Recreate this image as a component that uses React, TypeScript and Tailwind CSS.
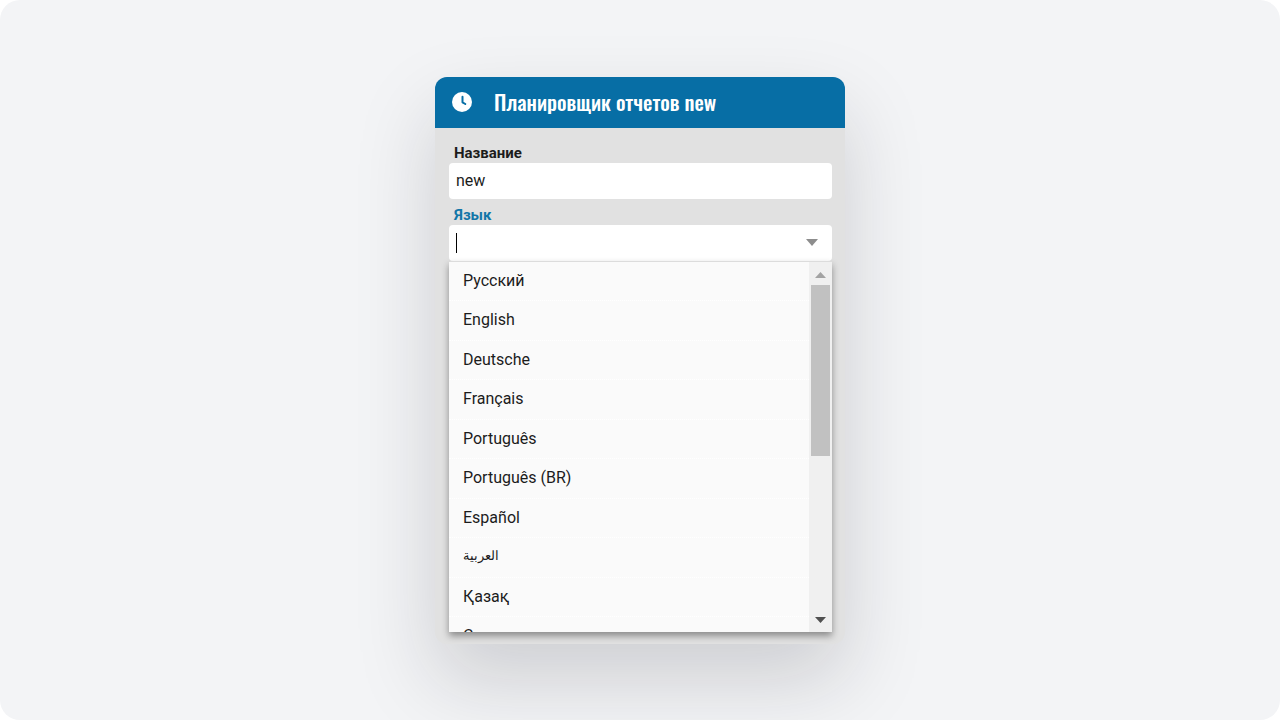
import { useState } from 'react';

const LANGUAGES = [
  { label: 'Русский' },
  { label: 'English' },
  { label: 'Deutsche' },
  { label: 'Français' },
  { label: 'Português' },
  { label: 'Português (BR)' },
  { label: 'Español' },
  { label: 'العربية', small: true },
  { label: 'Қазақ' },
  { label: 'Српски' },
];

function ClockIcon() {
  return (
    <svg width="20" height="20" viewBox="0 0 20 20" aria-hidden="true">
      <circle cx="10" cy="10" r="10" fill="#fff" />
      <path d="M10.5 4.8V10.3L13.3 12" fill="none" stroke="#076ea5" strokeWidth="2" strokeLinecap="round" strokeLinejoin="round" />
    </svg>
  );
}

function Triangle({ up, className }: { up?: boolean; className: string }) {
  return (
    <svg viewBox="0 0 12 6" preserveAspectRatio="none" aria-hidden="true" className={className}>
      <path d={up ? 'M0 6L6 0L12 6Z' : 'M0 0H12L6 6Z'} fill="currentColor" />
    </svg>
  );
}

export default function App() {
  const [name, setName] = useState('new');
  const [language, setLanguage] = useState('');
  const [open, setOpen] = useState(true);

  return (
    <div className="min-h-screen bg-white font-[Roboto,'Liberation_Sans',sans-serif] text-base text-[#1c1c1c]">
      <main className="flex min-h-screen items-center justify-center overflow-hidden rounded-[20px] bg-[#f3f4f6]">
        <form className="w-[410px] max-w-full rounded-xl bg-[#e1e1e1] shadow-[0_36px_80px_0_rgba(24,26,36,0.17)]">
          <header className="flex h-[51px] items-center gap-[22px] rounded-t-xl bg-[#076ea5] px-[17px]">
            <ClockIcon />
            <h1 className="font-['Oswald','Liberation_Sans_Narrow',sans-serif] text-[21px] leading-8 font-medium whitespace-nowrap text-white">
              Планировщик отчетов new
            </h1>
          </header>

          <div className="pt-[15px] pr-[13px] pb-3 pl-[14px]">
            <label htmlFor="name" className="block px-[5px] text-[15px] leading-5 font-bold">Название</label>
            <input
              id="name"
              value={name}
              onChange={(e) => setName(e.target.value)}
              className="block h-9 w-full rounded-sm bg-white px-[7px] outline-none"
            />

            <label htmlFor="language" className="mt-[6px] block px-[5px] text-[15px] leading-5 font-bold text-[#1376a8]">Язык</label>
            <div className="flex h-9 items-center rounded-sm bg-white pr-[14px] pl-[7px]">
              {!language && <span className="h-5 w-px bg-black" />}
              <input
                id="language"
                role="combobox"
                aria-expanded={open}
                aria-controls="language-list"
                value={language}
                onChange={(e) => setLanguage(e.target.value)}
                className="h-full min-w-0 flex-1 outline-none"
              />
              <button type="button" aria-label="Показать список" onClick={() => setOpen(!open)} className="text-[#8d8d8d]">
                <Triangle className="h-[7px] w-3" />
              </button>
            </div>

            {open && (
              <div className="flex h-[371px] border-t border-[#dcdcdc] bg-[#fafafa] shadow-[0_4px_7px_0_rgba(0,0,0,0.38)]">
                <div className="min-w-0 flex-1 overflow-y-auto [scrollbar-width:none]">
                  <ul id="language-list" role="listbox" className="grid h-[395px] auto-rows-fr">
                    {LANGUAGES.map((l) => (
                      <li
                        key={l.label}
                        role="option"
                        aria-selected={l.label === language}
                        onClick={() => setLanguage(l.label)}
                        className={`flex items-center border-b border-dotted border-white px-[14px] hover:bg-gray-100 ${l.small ? 'pb-1 text-[13px]' : ''}`}
                      >
                        {l.label}
                      </li>
                    ))}
                  </ul>
                </div>
                <div aria-hidden="true" className="flex w-[23px] flex-col items-center bg-[#f0f0f0]">
                  <div className="flex h-[23px] items-center pt-[3px] text-[#a3a3a3]"><Triangle up className="h-[6px] w-[11px]" /></div>
                  <div className="h-[171px] w-[19px] bg-[#c1c1c1]" />
                  <div className="mt-auto flex h-6 items-center text-[#505050]"><Triangle className="h-[6px] w-[11px]" /></div>
                </div>
              </div>
            )}
          </div>
        </form>
      </main>
    </div>
  );
}
